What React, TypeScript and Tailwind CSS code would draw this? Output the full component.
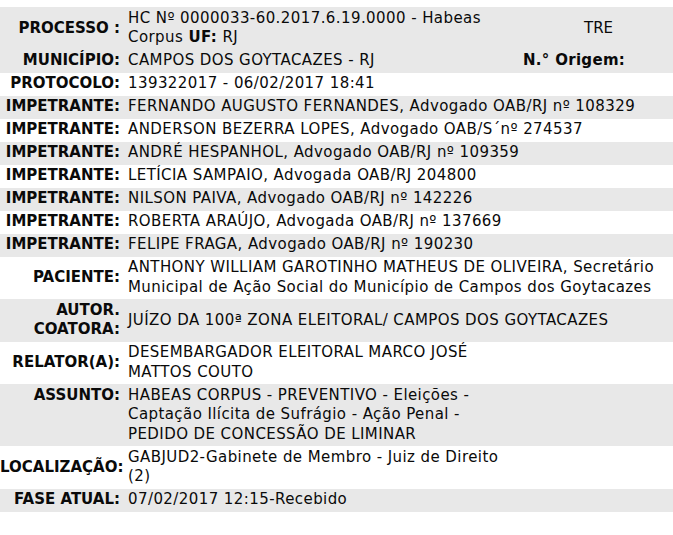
import React from "react";

const LBL = "w-[123px] shrink-0 pr-[3px] text-right font-bold whitespace-nowrap";
const VAL = "self-center pl-[5px] whitespace-nowrap tracking-[0.42px]";

function Row({
  label,
  children,
  gray,
  top,
}: {
  label: React.ReactNode;
  children: React.ReactNode;
  gray?: boolean;
  top?: boolean;
}) {
  return (
    <div className={gray ? "flex bg-[#e8e8e8] py-[1.75px]" : "flex py-[1.75px]"}>
      <div className={top ? LBL + " self-start" : LBL + " self-center"}>{label}</div>
      <div className={VAL}>{children}</div>
    </div>
  );
}

export default function App() {
  const imp: [string, string][] = [
    ["FERNANDO AUGUSTO FERNANDES, Advogado OAB/RJ nº 108329", "g"],
    ["ANDERSON BEZERRA LOPES, Advogado OAB/S´nº 274537", "w"],
    ["ANDRÉ HESPANHOL, Advogado OAB/RJ nº 109359", "g"],
    ["LETÍCIA SAMPAIO, Advogada OAB/RJ 204800", "w"],
    ["NILSON PAIVA, Advogado OAB/RJ nº 142226", "g"],
    ["ROBERTA ARAÚJO, Advogada OAB/RJ nº 137669", "w"],
    ["FELIPE FRAGA, Advogado OAB/RJ nº 190230", "g"],
  ];
  return (
    <div className="w-[673px] h-[535px] overflow-hidden bg-white pt-[7px] font-['DejaVu_Sans',sans-serif] text-[15px] leading-[19.5px] text-[#0a0a0a]">
      <div className="grid grid-cols-[123px_357px_1fr] bg-[#e8e8e8]">
        <div className="self-center pr-[3px] text-right font-bold whitespace-nowrap">PROCESSO :</div>
        <div className="py-[1.75px] pl-[5px] whitespace-nowrap tracking-[0.42px]">
          HC Nº 0000033-60.2017.6.19.0000 - Habeas
          <br />
          Corpus <span className="font-bold">UF:</span> RJ
        </div>
        <div className="self-center pl-[104px] whitespace-nowrap">TRE</div>
        <div className="self-center py-[1.75px] pr-[3px] text-right font-bold whitespace-nowrap">MUNICÍPIO:</div>
        <div className="self-center py-[1.75px] pl-[5px] whitespace-nowrap tracking-[0.42px]">CAMPOS DOS GOYTACAZES - RJ</div>
        <div className="self-center py-[1.75px] pl-[43px] font-bold whitespace-nowrap tracking-[0.3px]">N.° Origem:</div>
      </div>
      <Row label="PROTOCOLO:">139322017 - 06/02/2017 18:41</Row>
      {imp.map(([t, c], i) => (
        <Row key={i} label="IMPETRANTE:" gray={c === "g"}>
          {t}
        </Row>
      ))}
      <Row label="PACIENTE:">
        ANTHONY WILLIAM GAROTINHO MATHEUS DE OLIVEIRA, Secretário
        <br />
        Municipal de Ação Social do Município de Campos dos Goytacazes
      </Row>
      <Row
        gray
        label={
          <>
            AUTOR.
            <br />
            COATORA:
          </>
        }
      >
        JUÍZO DA 100ª ZONA ELEITORAL/ CAMPOS DOS GOYTACAZES
      </Row>
      <Row label="RELATOR(A):">
        DESEMBARGADOR ELEITORAL MARCO JOSÉ
        <br />
        MATTOS COUTO
      </Row>
      <Row gray top label="ASSUNTO:">
        HABEAS CORPUS - PREVENTIVO - Eleições -
        <br />
        Captação Ilícita de Sufrágio - Ação Penal -
        <br />
        PEDIDO DE CONCESSÃO DE LIMINAR
      </Row>
      <Row label="LOCALIZAÇÃO:">
        GABJUD2-Gabinete de Membro - Juiz de Direito
        <br />
        (2)
      </Row>
      <Row gray label="FASE ATUAL:">
        07/02/2017 12:15-Recebido
      </Row>
    </div>
  );
}
